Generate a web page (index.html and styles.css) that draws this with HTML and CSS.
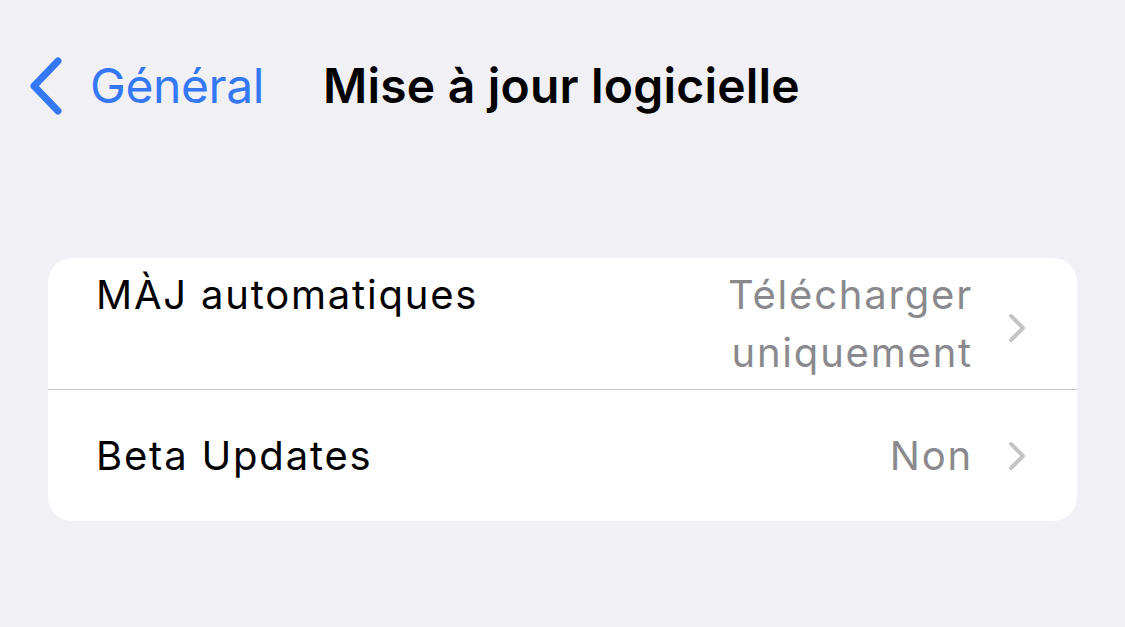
FILE: index.html
```html
<!DOCTYPE html>
<html lang="fr">
<head>
<meta charset="utf-8">
<title>Mise à jour logicielle</title>
<link rel="stylesheet" href="styles.css">
</head>
<body>
  <header class="navbar">
    <a class="back" href="#">
      <svg class="back-chevron" width="36" height="58" viewBox="0 0 36 58" aria-hidden="true">
        <path d="M30 4 L6 29 L30 54" fill="none" stroke="currentColor" stroke-width="7" stroke-linecap="round" stroke-linejoin="round"/>
      </svg>
      <span class="back-label">Général</span>
    </a>
    <h1 class="title">Mise à jour logicielle</h1>
  </header>

  <main class="content">
    <section class="group">
      <div class="row row-tall">
        <span class="row-label">MÀJ automatiques</span>
        <span class="row-value">Télécharger<br>uniquement</span>
        <svg class="disclosure" width="20" height="30" viewBox="0 0 20 30" aria-hidden="true">
          <path d="M4 3 L16 15 L4 27" fill="none" stroke="currentColor" stroke-width="4" stroke-linecap="round" stroke-linejoin="round"/>
        </svg>
      </div>
      <div class="row">
        <span class="row-label">Beta Updates</span>
        <span class="row-value">Non</span>
        <svg class="disclosure" width="20" height="30" viewBox="0 0 20 30" aria-hidden="true">
          <path d="M4 3 L16 15 L4 27" fill="none" stroke="currentColor" stroke-width="4" stroke-linecap="round" stroke-linejoin="round"/>
        </svg>
      </div>
    </section>
  </main>
</body>
</html>
```
FILE: styles.css
```css
* { box-sizing: border-box; }

html, body {
  margin: 0;
  padding: 0;
  background: #f0f0f5;
  font-family: Inter, "Noto Sans", "Liberation Sans", sans-serif;
  color: #000;
}

body {
  width: 1125px;
  height: 627px;
  overflow: hidden;
}

/* Navigation bar: back button + page title */
.navbar {
  display: flex;
  align-items: center;
  gap: 59px;
  padding: 56px 0 0 28px;
}

.back {
  display: flex;
  align-items: center;
  gap: 26px;
  color: #3478f6;
  text-decoration: none;
}

.back-chevron { display: block; }

.back-label {
  font-size: 48px;
  font-weight: 400;
  letter-spacing: -0.4px;
}

.title {
  margin: 0;
  font-size: 48px;
  font-weight: 600;
  letter-spacing: 0.2px;
}

/* Grouped settings list */
.content {
  padding: 0 48px;
  margin-top: 143px;
}

.group {
  background: #fff;
  border-radius: 24px;
  overflow: hidden;
}

.row {
  display: flex;
  align-items: center;
  height: 132px;
  padding: 0 50px 0 48px;
  font-size: 40px;
  line-height: 58px;
  letter-spacing: 1.8px;
}

.row + .row {
  border-top: 1px solid #c8c8cc;
}

.row-tall {
  height: 131px;
  align-items: flex-start;
  padding-top: 8px;
}

.row-label {
  flex: 1;
}

.row-value {
  color: #8a8a8e;
  text-align: right;
}

.disclosure {
  color: #c4c4c7;
  margin-left: 34px;
  flex-shrink: 0;
}

.row-tall .disclosure {
  align-self: center;
}
```
